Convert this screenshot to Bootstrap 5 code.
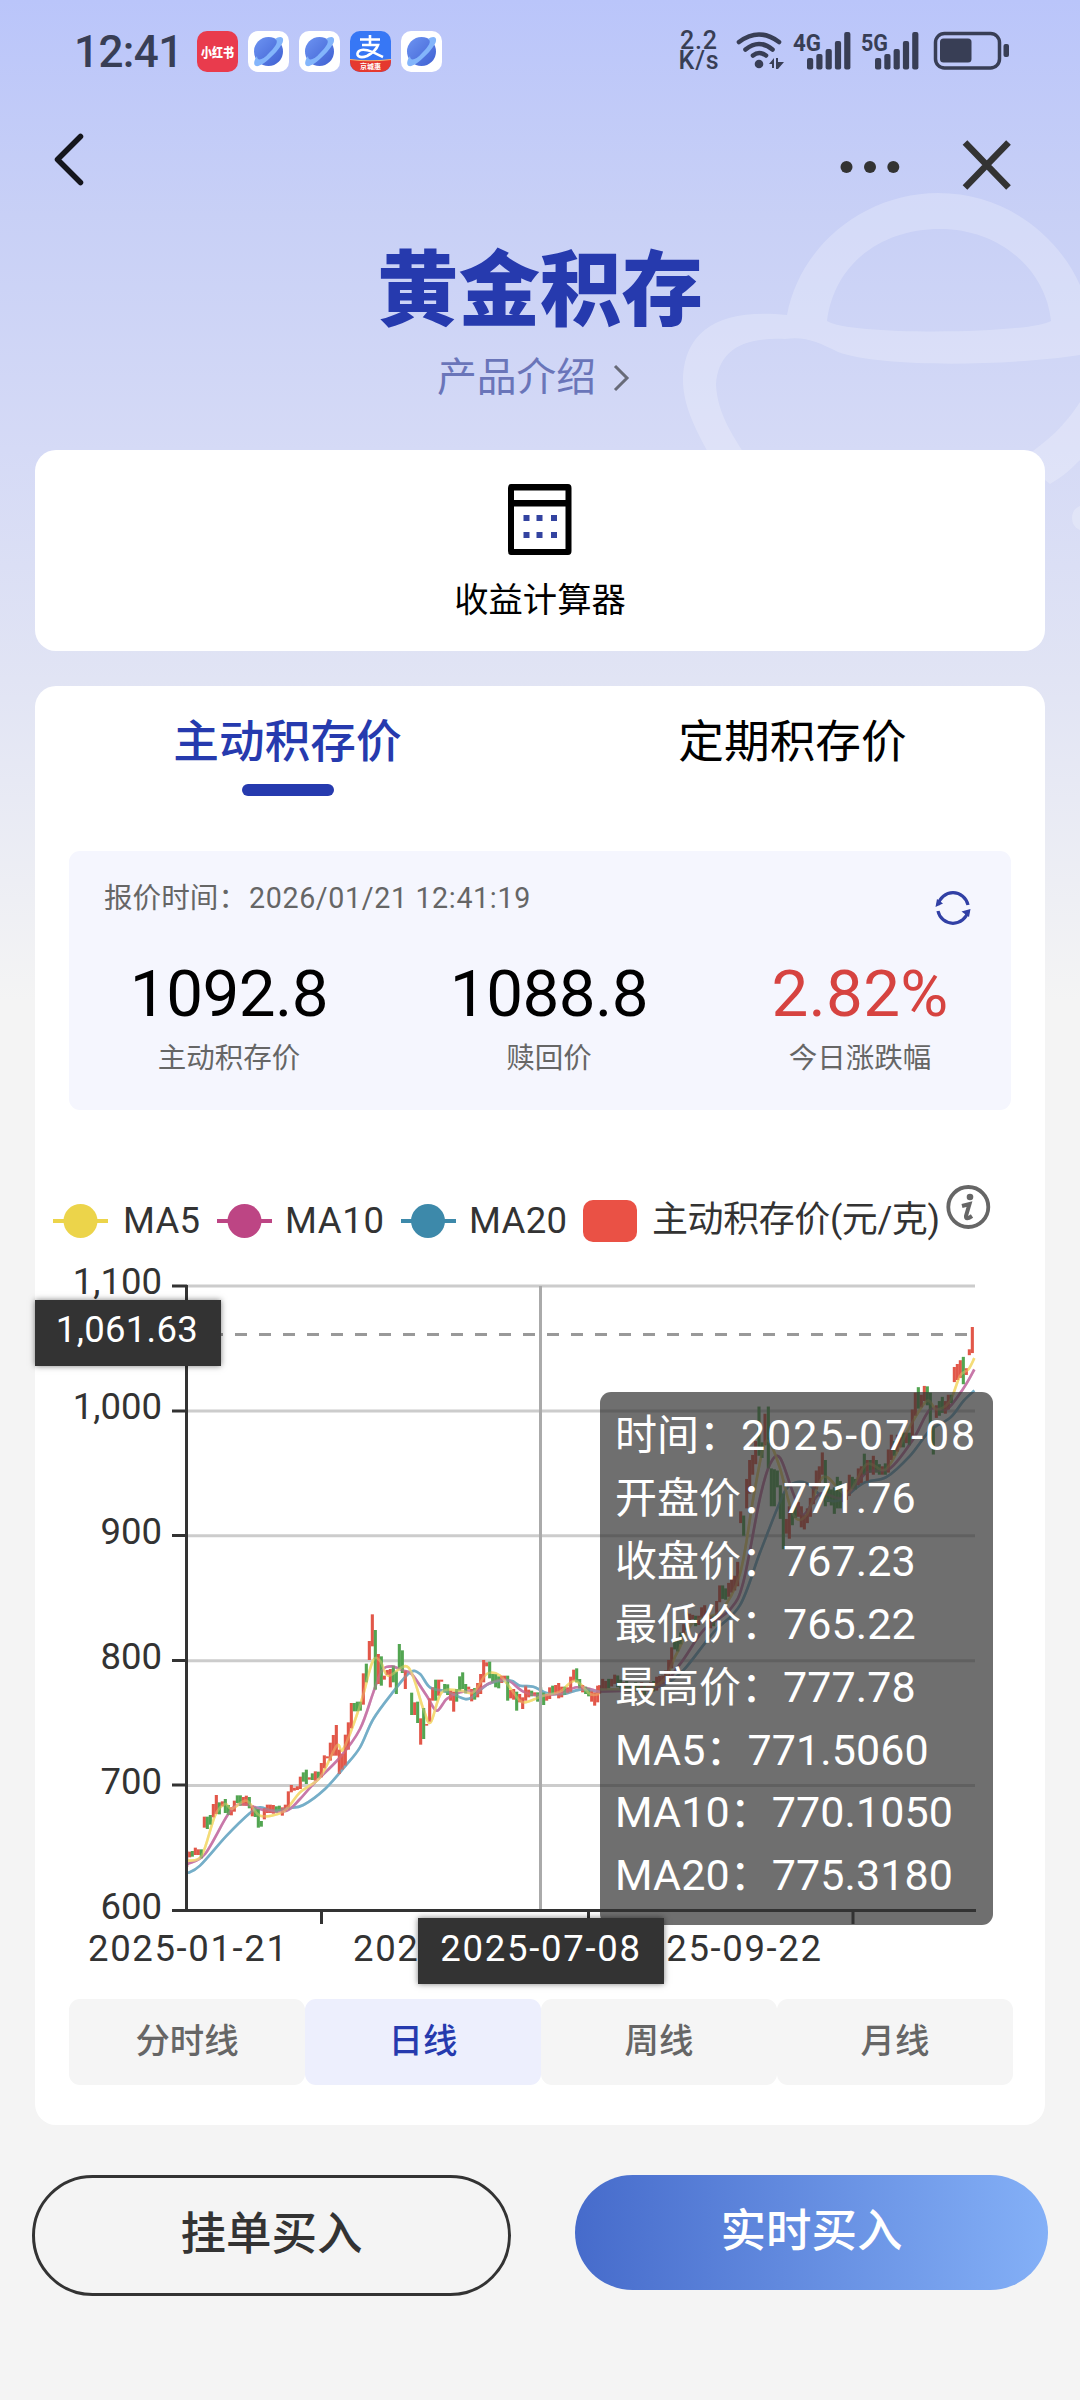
<!DOCTYPE html>
<html lang="zh-CN">
<head>
<meta charset="utf-8">
<meta name="viewport" content="width=device-width, initial-scale=1">
<title>黄金积存</title>
<link href="https://cdn.jsdelivr.net/npm/bootstrap@5.3.0/dist/css/bootstrap.min.css" rel="stylesheet">
<style>
  :root { --brand: #263aae; --ink: #333; }
  body { font-family: Roboto, "Noto Sans CJK SC", sans-serif; color: #000; background: #f4f4f4; }
  .phone { width: 1080px; height: 2400px; background: linear-gradient(180deg, #bac5fa 0, #c8d0f6 215px, #d5daf6 450px, #e1e4f4 680px, #f4f4f4 1000px); }
  .planet { top: 180px; right: 0; width: 420px; height: 380px; }
  .statusbar { height: 104px; padding: 31px 71px 31px 74px; color: #383e55; }
  .clock { font-size: 44px; font-weight: 500; line-height: 43px; width: 109px; letter-spacing: -.6px; margin-right: 14px; white-space: nowrap; }
  .netspeed { font-size: 25px; font-weight: 500; line-height: 20px; width: 42px; margin-right: 16px; letter-spacing: .8px; }
  .topbar { height: 110px; padding: 29px 69px 0 54px; }
  .page-title { font-family: "Noto Sans CJK SC", sans-serif; font-size: 81.5px; font-weight: 900; line-height: 90px; color: var(--brand); margin-top: 24px; }
  .intro { font-size: 39.8px; line-height: 56px; color: #6a75b9; margin-top: 22px; padding-right: 13px; }
  .panel { background: #fff; border-radius: 21px; margin: 0 35px; }
  .calc { height: 201px; margin-top: 44px; padding-top: 34px; font-size: 34.3px; }
  .calc span { line-height: 44px; margin-top: 23px; }
  .market { height: 1439px; margin-top: 35px; }
  .price-tabs { height: 165px; padding-top: 24px; font-size: 45.7px; line-height: 66px; }
  .price-tabs .on { color: var(--brand); font-weight: 500; }
  .price-tabs .on::after { content: ""; display: block; width: 92px; height: 12px; border-radius: 6px; background: var(--brand); margin: 8px auto 0; }
  .quote { height: 259px; background: #f5f6fe; border-radius: 11px; margin: 0 34px; }
  .quote-head { padding: 26px 40px 0 35px; color: #666; font-size: 28.6px; line-height: 42px; height: 104px; }
  .quote-head .stamp { letter-spacing: .65px; margin-left: 2px; }
  .quote-item b { display: block; font-size: 65.5px; font-weight: 400; line-height: 78px; letter-spacing: -.5px; }
  .quote-item span { display: block; font-size: 28.5px; line-height: 42px; margin-top: 5px; color: #666; }
  .q1 { width: 320px; } .q2 { width: 320px; } .q3 { width: 302px; }
  .q3 b { letter-spacing: .3px; color: #d64340; }
  .legend-row { height: 64px; margin: 66px 0 0 18px; font-size: 36.5px; line-height: 52px; color: var(--ink); white-space: nowrap; }
  .legend-row svg { flex: none; }
  .chart-area { height: 759px; }
  .chart-area > svg { display: block; }
  .y-pointer, .x-pointer { background: #333; color: #fff; font-size: 36.5px; text-align: center; box-shadow: 0 0 6px rgba(0,0,0,.5); white-space: nowrap; }
  .y-pointer { left: 0; top: 60px; width: 186px; height: 66px; line-height: 60px; padding-right: 2px; letter-spacing: .3px; }
  .x-pointer { left: 383px; top: 678px; width: 246px; height: 66px; line-height: 62px; letter-spacing: 1.7px; }
  .tip { left: 565px; top: 152px; width: 393px; height: 533px; border-radius: 11px; background: rgba(50,50,50,.7); color: #fff; font-size: 42px; line-height: 62.9px; padding: 13px 15px; white-space: nowrap; }
  .tip span { font-size: 43px; line-height: 1; letter-spacing: .1px; }
  .tip .wide { letter-spacing: 1.9px; }
  .period { height: 86px; margin: 0 32px 0 34px; font-size: 34.4px; color: #666; }
  .period div { background: #f5f5f5; border-radius: 11px; line-height: 84px; font-weight: 500; }
  .period .on { background: #edeffd; color: var(--brand); }
  .actions { margin: 50px 32px 0; gap: 64px; }
  .act { border-radius: 62px; font-size: 45.5px; font-weight: 500; padding: 0; }
  .act-line { width: 479px; height: 121px; border: 3px solid #333; color: #333; background: transparent; line-height: 109px; padding-bottom: 2px; }
  .act-fill { width: 473px; height: 115px; border: 0; color: #fff; background: linear-gradient(90deg, #466bcb, #84b0f7); line-height: 107px; padding-bottom: 2px; }
</style>
<script src="https://cdn.jsdelivr.net/npm/bootstrap@5.3.0/dist/js/bootstrap.bundle.min.js"></script>
</head>
<body>
<main class="phone position-relative overflow-hidden">
  <svg class="planet position-absolute" viewBox="660 180 420 380" fill="#fff" fill-opacity=".23" aria-hidden="true">
    <path fill-rule="evenodd" d="M787 315C800 245 865 193 938 193C1010 193 1060 240 1080 285V355C1010 366 880 368 838 352C818 342 805 336 785 339C740 337 718 352 716 385C718 415 732 435 755 470H718C695 430 682 405 683 376C686 330 720 308 787 315ZM827 321C834 265 880 229 940 229C1000 229 1046 270 1051 321C1030 334 850 336 827 321Z"/>
    <path d="M1080 402C1065 425 1050 440 1020 460L1050 484C1062 477 1070 470 1080 460ZM1080 506A13 13 0 0 0 1080 530Z"/>
  </svg>

  <header class="position-relative">
    <div class="statusbar d-flex align-items-start">
      <div class="clock">12:41</div>
      <svg width="245" height="41" viewBox="0 0 245 41">
        <defs>
          <linearGradient id="globe" x1="0" y1="0" x2="1" y2="1"><stop offset="0" stop-color="#6d94f2"/><stop offset="1" stop-color="#3f60d2"/></linearGradient>
          <clipPath id="tile"><rect width="41" height="41" rx="10"/></clipPath>
          <g id="browser"><rect width="41" height="41" rx="10" fill="#fff"/><circle cx="20.5" cy="20.5" r="14.5" fill="url(#globe)"/><path d="M27 8C31 5 36 5 35 10C34 17 14 37 8 35C5 34 6 29 9 25C9 30 14 30 21 22C28 15 31 10 27 8Z" fill="#83b5fb"/></g>
        </defs>
        <rect width="41" height="41" rx="10" fill="#e93b4d"/>
        <text x="20.5" y="26" font-size="13" font-weight="900" fill="#fff" text-anchor="middle" textLength="33" lengthAdjust="spacingAndGlyphs">小红书</text>
        <use href="#browser" x="51"/><use href="#browser" x="102"/>
        <g transform="translate(153)" clip-path="url(#tile)">
          <rect width="41" height="41" fill="#3777f5"/>
          <path d="M0 28.500Q20 31 41 28.500V41H0Z" fill="#e5392f"/><path d="M0 28.500Q20 31 41 28.500" fill="none" stroke="#fbb36b" stroke-width="1.200"/>
          <path d="M10 8.500H30M20 4V14M12 14H28Q26 20 17 25C9 28 5 24 9 20C14 16 24 22 33 26" fill="none" stroke="#fff" stroke-width="2.600"/>
          <text x="20.500" y="38" font-size="7" font-weight="700" fill="#fff" text-anchor="middle">京城惠</text>
        </g>
        <use href="#browser" x="204"/>
      </svg>
      <div class="netspeed ms-auto text-center">2.2<br>K/s</div>
      <svg width="273" height="45" viewBox="736 27 273 45" fill="#383e55" style="margin-top:-4px">
        <g fill="none" stroke="#383e55" stroke-width="4.600" stroke-linecap="round"><path d="M739 42Q759 27 779 42"/><path d="M745.500 49.500Q759 38.500 772.500 49.500"/><path d="M753 55.500Q759 50.500 766 55.500"/></g>
        <circle cx="759" cy="64" r="4.300"/><path d="M769 64L774 58V68H772V64ZM776 58H778V62H784L778 69H776Z"/>
        <text x="793" y="50.500" font-size="24" font-weight="700" textLength="28" lengthAdjust="spacingAndGlyphs">4G</text>
        <g id="bars"><rect x="807" y="58" width="6.200" height="11.500" rx="2"/><rect x="816.300" y="54" width="6.200" height="15.500" rx="2"/><rect x="825.600" y="49" width="6.200" height="20.500" rx="2"/><rect x="834.900" y="41" width="6.200" height="28.500" rx="2"/><rect x="844.200" y="32" width="6.200" height="37.500" rx="2"/></g>
        <text x="861" y="50.500" font-size="24" font-weight="700" textLength="27" lengthAdjust="spacingAndGlyphs">5G</text>
        <use href="#bars" x="68"/>
        <rect x="935.500" y="33.500" width="64" height="34.500" rx="9" fill="none" stroke="#383e55" stroke-width="3.500"/><rect x="940" y="38.500" width="31.500" height="24" rx="3.500"/><rect x="1003.500" y="44" width="5.500" height="13" rx="2"/>
      </svg>
    </div>
    <div class="topbar d-flex justify-content-between">
      <svg width="30" height="54" viewBox="0 0 30 54"><path d="M26.500 3.500L3.500 26.500L26.500 49.500" fill="none" stroke="#15161c" stroke-width="5.500" stroke-linecap="round" stroke-linejoin="round"/></svg>
      <svg width="171" height="64" viewBox="840 133 171 64"><g fill="#333"><circle cx="846.500" cy="167" r="6"/><circle cx="870" cy="167" r="6"/><circle cx="893.300" cy="167" r="6"/></g><path d="M965 142.500L1008.500 187.500M1008.500 142.500L965 187.500" stroke="#333" stroke-width="6.500"/></svg>
    </div>
    <h1 class="page-title text-center mb-0">黄金积存</h1>
    <div class="intro d-flex justify-content-center align-items-center">产品介绍<svg class="ms-3" width="18" height="30" viewBox="0 0 18 30"><path d="M3 3L15 15L3 27" fill="none" stroke="#686b78" stroke-width="3"/></svg></div>
  </header>

  <section class="panel calc position-relative d-flex flex-column align-items-center">
    <svg width="64" height="71" viewBox="0 0 64 71"><path fill-rule="evenodd" d="M3 0H60Q63.500 0 63.500 4V67Q63.500 71 60 71H3Q0 71 0 67V4Q0 0 3 0ZM6 6.500V16H57.500V6.500ZM6 22.500V65H57.500V22.500Z"/><path fill="#3343a0" d="M15.500 31h6v6h-6zM28.500 31h6v6h-6zM43 31h6v6h-6zM15.500 48h6v6h-6zM28.500 48h6v6h-6zM43 48h6v6h-6z"/></svg>
    <span>收益计算器</span>
  </section>

  <section class="panel market position-relative">
    <nav class="price-tabs row g-0 text-center"><div class="col on">主动积存价</div><div class="col">定期积存价</div></nav>
    <div class="quote">
      <div class="quote-head d-flex justify-content-between align-items-start">
        <div>报价时间：<span class="stamp">2026/01/21 12:41:19</span></div>
        <svg style="margin-top:14px" width="36" height="34" viewBox="0 0 36 34"><g fill="none" stroke="#3140a5" stroke-width="3.200"><path d="M3 14A15.300 15.300 0 0 1 33 14"/><path d="M3 20A15.300 15.300 0 0 0 33 20"/></g><path d="M.5 16L2 8L8 12.500ZM35.500 18L34 26L26.500 20.500L35.500 18Z" fill="#3140a5"/></svg>
      </div>
      <div class="d-flex text-center">
        <div class="quote-item q1"><b>1092.8</b><span>主动积存价</span></div>
        <div class="quote-item q2"><b>1088.8</b><span>赎回价</span></div>
        <div class="quote-item q3"><b>2.82%</b><span>今日涨跌幅</span></div>
      </div>
    </div>

    <div class="legend-row d-flex">
      <svg width="56" height="92" viewBox="0 1 56 92"><path d="M0 46H55" stroke="#ecd44a" stroke-width="4"/><circle cx="27.500" cy="46" r="17" fill="#ecd44a"/></svg>
      <svg width="341" height="92" viewBox="108 1178 341 92" font-size="36.500" fill="#333">
        <text x="122" y="1234.500" textLength="77">MA5</text>
        <path d="M216 1223H271" stroke="#bd4584" stroke-width="4"/><circle cx="243.500" cy="1223" r="17" fill="#bd4584"/><text x="284" y="1234.500" textLength="99">MA10</text>
        <path d="M400 1223H449" stroke="#3d89aa" stroke-width="4"/><circle cx="427" cy="1223" r="17" fill="#3d89aa"/>
      </svg>
      <svg width="492" height="92" viewBox="449 1178 492 92" font-size="36.500" fill="#333">
        <path d="M449 1223H455" stroke="#3d89aa" stroke-width="4"/><text x="468" y="1234.500" textLength="98">MA20</text>
        <rect x="582" y="1202" width="54" height="42" rx="10" fill="#ea5145"/><text x="651" y="1234" font-size="36" textLength="288">主动积存价(元/克)</text>
      </svg>
      <svg class="mt-2 ms-1" width="46" height="46" viewBox="944 1185 46 46"><circle cx="966.300" cy="1208" r="20" fill="none" stroke="#666" stroke-width="3.800"/><circle cx="968" cy="1198" r="3.300" fill="#666"/><path d="M960 1207L967.500 1205L964 1217Q963.500 1221.500 970 1217" fill="none" stroke="#666" stroke-width="4"/></svg>
    </div>

    <div class="chart-area position-relative">
      <svg width="1010" height="759" viewBox="35 1241 1010 759" id="kline">
        <g id="grid" stroke="#ccc" stroke-width="3"></g>
        <path d="M187 1335.500H975" stroke="#999" stroke-width="3" stroke-dasharray="12 12"/>
        <g id="series" fill="none" stroke-width="2.600"></g>
        <path d="M540.500 1287V1911" stroke="#aaa" stroke-width="3"/>
        <path d="M186.500 1286V1911M172 1911.500H976M172 1287H187M172 1412H187M172 1536.500H187M172 1661.500H187M172 1786H187M321.500 1911V1925M588.500 1911V1925M853 1911V1925" fill="none" stroke="#333" stroke-width="3"/>
        <g id="axis" font-size="36.500" fill="#333"></g>
      </svg>
      <div class="tip position-absolute">时间：<span class="wide">2025-07-08</span><br>开盘价：<span>771.76</span><br>收盘价：<span>767.23</span><br>最低价：<span>765.22</span><br>最高价：<span>777.78</span><br><span>MA5</span>：<span>771.5060</span><br><span>MA10</span>：<span>770.1050</span><br><span>MA20</span>：<span>775.3180</span></div>
      <div class="y-pointer position-absolute">1,061.63</div>
      <div class="x-pointer position-absolute">2025-07-08</div>
    </div>

    <div class="period row g-0 text-center"><div class="col">分时线</div><div class="col on">日线</div><div class="col">周线</div><div class="col">月线</div></div>
  </section>

  <footer class="actions d-flex align-items-start">
    <button type="button" class="act act-line">挂单买入</button>
    <button type="button" class="act act-fill">实时买入</button>
  </footer>
</main>
<script>
// Price axis, date axis and grid
const grid = document.getElementById('grid'), axis = document.getElementById('axis');
['1,100', '1,000', '900', '800', '700', '600'].forEach((t, i) => {
  const y = 1287 + i * 124.9;
  if (i < 5) grid.innerHTML += `<path d="M187 ${y}H975"/>`;
  axis.innerHTML += `<text x="162" y="${y + 8}" text-anchor="end">${t}</text>`;
});
[['2025-01-21', 88], ['2025-04-21', 353], ['2025-09-22', 622]].forEach(([t, x]) => {
  axis.innerHTML += `<text x="${x}" y="1962" textLength="199">${t}</text>`;
});

// Candles: colour, x, top, bottom. Two segments, each with its own scale.
const early = `r80 875 924,r89 878 895,g97 876 893,r106 866 888,r115 871 888,g124 871 898,r133 773 806,g142 773 810,g151 768 797,r160 735 775,r169 708 765,g178 730 766,r187 727 742,g196 720 762,g205 738 768,r214 745 769,r223 725 758,g232 709 732,g241 709 740,r250 714 740,r259 710 740,g268 714 748,r277 740 772,g286 745 774,g295 750 806,g304 786 803,r313 747 781,r322 737 762,r331 737 762,r340 738 764,g349 742 760,g358 740 756,r367 745 770,r376 737 757,r385 697 752,r394 678 700,r403 686 695,r412 682 693,r421 653 690,g430 640 668,g439 632 675,r448 655 662,g457 643 663,r466 637 665,g475 638 658,r484 612 655,r493 589 628,r502 592 598,r511 551 605,r520 528 590,r529 498 590,r538 572 645,r547 585 632,r556 527 620,r565 490 572,r574 432 508,g583 432 457,g592 428 457,g601 428 455,r610 343 437,g619 314 370,r628 246 303,r637 166 262,g646 213 392,r655 285 375,g664 292 380,r673 350 362,r682 333 348,r691 330 385,g700 320 370,g709 338 405,g718 255 330,g727 274 342,r736 335 390,g755 401 468,r764 430 468,g773 428 492,r782 478 557,g791 447 540,r800 495 500,r809 418 488,r818 385 425,g827 362 425,r836 362 410,r845 362 368,g854 375 400,g863 376 408,r872 395 425,r881 398 458,g890 390 428,g899 352 395,g908 340 390,g917 375 403,r926 383 392,r935 390 427,g944 387 422,r953 372 415,r962 345 405,r971 303 370,r980 310 322,g989 308 358,g998 345 372,g1007 345 385,g1016 352 388,r1025 350 372,r1034 350 362,g1043 350 425,r1052 393 418,r1061 390 422,g1070 398 455,r1079 405 430,r1088 415 450,r1097 380 425,r1106 392 415,g1115 395 412,r1124 400 410,g1133 400 428,g1142 385 430,g1151 400 438,r1160 405 425,r1169 385 420,g1178 380 408,r1187 378 408,r1196 372 418,r1205 383 415,g1214 383 408,r1223 385 403,r1232 353 400,r1241 332 365,g1250 328 370,g1259 360 388,r1268 378 400,g1277 383 405,g1286 388 412,r1295 395 428,r1304 400 440,r1313 380 430`;
const late = `r59 965 985,r68 950 975,r77 955 975,g86 950 972,r95 950 968,r104 940 962,g113 942 970,g122 952 975,r131 958 975,g140 955 980,g149 962 982,r158 960 985,g167 958 980,g176 962 982,r185 958 982,g194 962 988,r203 960 980,r212 958 978,g221 955 980,r230 945 978,r239 943 968,r248 942 962,r257 930 955,r266 905 945,r275 875 925,g284 850 880,g293 860 885,g302 840 868,r311 820 850,g320 792 835,r329 795 815,r338 798 808,g347 800 825,r356 800 822,r365 780 805,r374 775 800,g383 790 815,r392 800 830,g401 800 825,r410 765 805,r419 728 768,g428 728 760,g437 735 762,r446 722 755,r455 710 745,r464 705 740,r473 672 730,r482 552 580,g491 562 610,r500 475 545,r509 430 510,r518 418 465,r527 385 440,g537 303 420,g546 388 425,r555 320 395,g565 303 450,g574 450 540,g583 452 540,g592 455 495,g601 490 570,g610 510 642,r619 570 605,r628 540 617,g637 545 585,g646 540 568,r655 530 565,r664 540 590,r673 560 595,r682 545 580,r691 520 565,r700 490 535,r709 455 500,r718 445 485,r727 412 465,g736 430 540,g745 490 530,g754 500 538,g763 495 558,g772 470 545,g781 480 545,r790 505 530,r799 500 525,r808 465 515,g817 470 500,g826 475 500,r835 450 490,r844 445 485,g853 415 465,r862 430 480,g871 430 460,r880 420 465,g889 430 460,g898 440 465,r907 445 465,g916 438 465,r925 405 460,r934 370 430,g943 385 420,r952 370 410,r961 375 400,g970 365 400,r979 365 390,g988 365 395,r997 310 375,r1006 270 325,g1015 257 308,r1024 275 305,r1033 254 290,g1042 255 300,g1051 270 390,g1060 350 417,r1069 300 330,g1078 290 325,g1087 280 318,r1096 290 320,r1105 275 310,g1114 275 295,r1123 209 245,r1132 202 240,r1141 193 235,g1150 185 250,r1159 212 228,r1168 167 181,r1177 114 176`;

const lines = {
  '#75aec8': [[83,942,120,920,200,830,270,762,300,745,340,755,385,748,430,738,495,690,555,622,600,565,640,480,700,398,750,340,780,345,810,385,860,398,915,420,940,412,985,375,1050,365,1080,380,1120,383,1160,402,1210,405,1260,392,1320,398],
              [60,975,180,975,250,965,310,930,400,840,480,775,540,650,600,530,630,490,680,485,730,520,780,525,850,485,920,470,990,420,1050,360,1110,330,1150,290,1183,265]],
  '#c879a9': [[83,915,135,885,205,765,245,735,320,755,380,755,420,720,460,675,540,595,600,510,640,400,665,335,695,322,730,335,755,345,800,410,830,455,860,420,900,400,950,395,990,372,1040,362,1090,398,1140,410,1200,402,1250,385,1290,390,1320,400],
              [60,980,230,970,300,915,370,835,450,785,490,720,540,520,570,440,600,425,640,510,670,560,720,510,790,520,860,460,930,450,1000,380,1050,310,1100,310,1150,260,1183,215]],
  '#f4dc78': [[83,905,125,890,165,770,195,735,215,750,260,725,300,770,370,758,420,700,480,655,530,560,550,570,600,440,637,310,660,305,685,350,745,325,790,450,812,490,845,400,900,395,940,400,980,345,1020,350,1060,400,1090,430,1150,410,1200,398,1245,365,1290,405,1318,405],
              [60,975,230,965,290,890,340,815,420,790,480,700,520,520,550,400,570,390,600,450,640,560,680,560,730,470,800,510,860,440,920,450,990,350,1040,290,1070,310,1110,290,1140,230,1165,215,1183,188]]
};
const place = [(x, y) => [160 + x / 3, 1560 + y / 3], (x, y) => [580 + x / 3, 1280 + y * .4209]];

function curve(flat, f) {
  const p = [];
  for (let i = 0; i < flat.length; i += 2) p.push(f(flat[i], flat[i + 1]));
  let d = 'M' + p[0];
  for (let i = 0; i < p.length - 1; i++) {
    const a = p[i - 1] || p[i], b = p[i], c = p[i + 1], e = p[i + 2] || c;
    d += `C${b[0] + (c[0] - a[0]) / 6} ${b[1] + (c[1] - a[1]) / 6} ${c[0] - (e[0] - b[0]) / 6} ${c[1] - (e[1] - b[1]) / 6} ${c}`;
  }
  return d;
}
let out = '';
for (const [color, parts] of Object.entries(lines))
  parts.forEach((p, k) => out += `<path d="${curve(p, place[k])}" stroke="${color}"/>`);
[early, late].forEach((src, k) => src.split(',').forEach(c => {
  const [x, t, b] = c.slice(1).split(' ').map(Number), [px, y1] = place[k](x, t), y2 = place[k](x, b)[1];
  out += `<path d="M${px} ${y1}V${y2}" stroke-width="3.100" stroke="${c[0] === 'r' ? '#e25749' : '#52a551'}"/>`;
}));
// Averages are repeated half-transparent so they stay readable across the candles
for (const [color, parts] of Object.entries(lines))
  parts.forEach((p, k) => out += `<path d="${curve(p, place[k])}" stroke="${color}" stroke-opacity=".4"/>`);
document.getElementById('series').innerHTML = out;
</script>
</body>
</html>
